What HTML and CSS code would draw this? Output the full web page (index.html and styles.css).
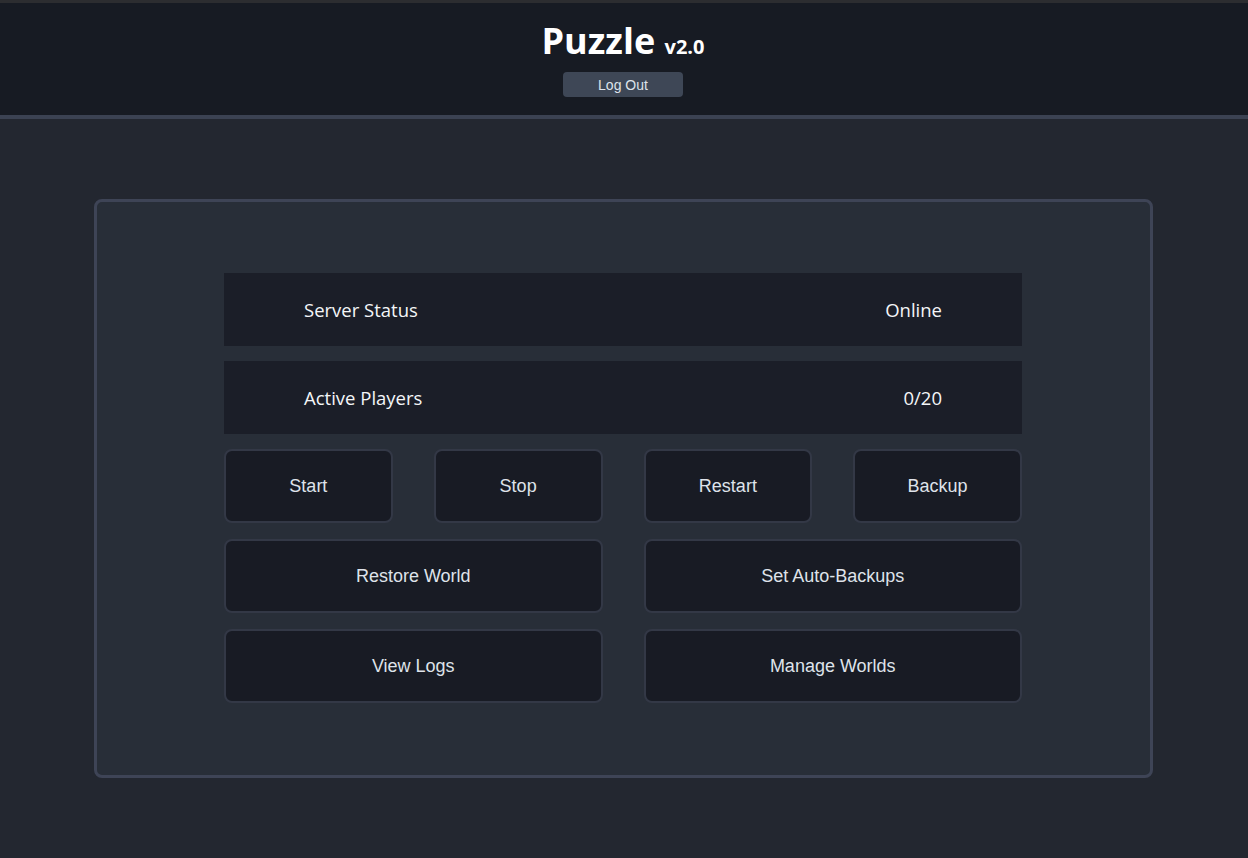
FILE: index.html
```html
<!DOCTYPE html>
<html>
<head>
<meta charset="utf-8">
<title>Puzzle</title>
<link rel="stylesheet" href="styles.css">
</head>
<body>
<header class="topbar">
  <h1 class="title">Puzzle <span class="version">v2.0</span></h1>
  <button class="logout">Log Out</button>
</header>
<main class="main">
  <section class="card">
    <div class="panel">
      <div class="stat">
        <span class="stat-label">Server Status</span>
        <span class="stat-value">Online</span>
      </div>
      <div class="stat">
        <span class="stat-label">Active Players</span>
        <span class="stat-value">0/20</span>
      </div>
      <div class="grid4">
        <button class="btn">Start</button>
        <button class="btn">Stop</button>
        <button class="btn">Restart</button>
        <button class="btn">Backup</button>
      </div>
      <div class="grid2">
        <button class="btn">Restore World</button>
        <button class="btn">Set Auto-Backups</button>
      </div>
      <div class="grid2">
        <button class="btn">View Logs</button>
        <button class="btn">Manage Worlds</button>
      </div>
    </div>
  </section>
</main>
</body>
</html>
```
FILE: styles.css
```css
html, body {
  margin: 0;
  padding: 0;
}
body {
  background: #232730;
  border-top: 3px solid #2c2d30;
  font-family: "Open Sans", "Noto Sans", sans-serif;
  color: #f2f2f2;
  min-height: 855px;
}
.topbar {
  background: #171b23;
  border-bottom: 4px solid #3b4252;
  height: 116px;
  box-sizing: border-box;
  display: flex;
  flex-direction: column;
  align-items: center;
  padding: 15px 2px 0 0;
}
.title {
  margin: 0;
  font-size: 36px;
  line-height: 46px;
  font-weight: 700;
  color: #ffffff;
}
.version {
  font-size: 20px;
}
.logout {
  margin-top: 2px;
  width: 120px;
  height: 25px;
  border: none;
  border-radius: 4px;
  background: #3e4756;
  color: #dde3ea;
  font-family: "Liberation Sans", Arial, sans-serif;
  font-size: 14px;
  padding: 0;
}
.main {
  padding: 80px 2px 0 0;
}
.card {
  width: 1059px;
  margin: 0 auto;
  box-sizing: border-box;
  border: 3px solid #3e4456;
  border-radius: 8px;
  background: #282e38;
  padding: 71px 0 72px;
}
.panel {
  width: 798px;
  margin: 0 auto;
  display: flex;
  flex-direction: column;
  gap: 15px;
}
.stat {
  height: 73px;
  background: #1b1e28;
  display: flex;
  align-items: center;
  justify-content: space-between;
  padding: 0 80px;
  font-size: 18.5px;
  color: #f4f6f8;
}
.grid4 {
  display: grid;
  grid-template-columns: repeat(4, 1fr);
  gap: 41px;
}
.grid2 {
  display: grid;
  grid-template-columns: repeat(2, 1fr);
  gap: 41px;
  margin-top: 1px;
}
.btn {
  height: 74px;
  background: #181b24;
  border: 2px solid #333846;
  border-radius: 8px;
  color: #dfe3ea;
  font-family: "Liberation Sans", Arial, sans-serif;
  font-size: 18px;
  padding: 0;
}
```
